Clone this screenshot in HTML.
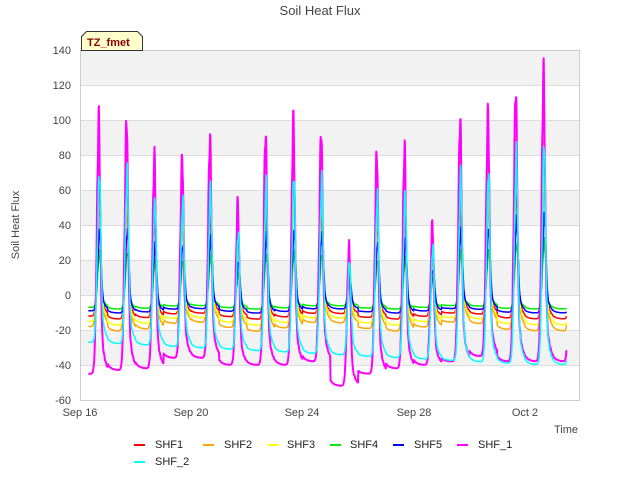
<!DOCTYPE html>
<html><head><meta charset="utf-8"><style>
html,body{margin:0;padding:0;background:#fff;width:640px;height:480px;overflow:hidden}
text{font-family:"Liberation Sans","DejaVu Sans",sans-serif}
</style></head><body>
<svg id="s" width="640" height="480" viewBox="0 0 640 480" xmlns="http://www.w3.org/2000/svg">
<rect x="0" y="0" width="640" height="480" fill="#fff"/>
<rect x="80" y="50" width="500" height="350" fill="#fff"/>
<rect x="80" y="50" width="500" height="35" fill="#f2f2f2"/>
<rect x="80" y="120" width="500" height="35" fill="#f2f2f2"/>
<rect x="80" y="190" width="500" height="35" fill="#f2f2f2"/>
<rect x="80" y="260" width="500" height="35" fill="#f2f2f2"/>
<rect x="80" y="330" width="500" height="35" fill="#f2f2f2"/>
<g stroke="#dcdcdc" stroke-width="1">
<line x1="80" y1="50.5" x2="580" y2="50.5"/><line x1="80" y1="85.5" x2="580" y2="85.5"/>
<line x1="80" y1="120.5" x2="580" y2="120.5"/><line x1="80" y1="155.5" x2="580" y2="155.5"/>
<line x1="80" y1="190.5" x2="580" y2="190.5"/><line x1="80" y1="225.5" x2="580" y2="225.5"/>
<line x1="80" y1="260.5" x2="580" y2="260.5"/><line x1="80" y1="295.5" x2="580" y2="295.5"/>
<line x1="80" y1="330.5" x2="580" y2="330.5"/><line x1="80" y1="365.5" x2="580" y2="365.5"/>
</g>
<g id="data"></g>
<rect x="80.5" y="50.5" width="499" height="350" fill="none" stroke="#ccc"/>
<g font-size="11" fill="#444" text-anchor="end">
<text x="71" y="54">140</text><text x="71" y="89">120</text><text x="71" y="124">100</text>
<text x="71" y="159">80</text><text x="71" y="194">60</text><text x="71" y="229">40</text>
<text x="71" y="264">20</text><text x="71" y="299">0</text><text x="71" y="334">-20</text>
<text x="71" y="369">-40</text><text x="71" y="404">-60</text>
</g>
<g font-size="11" fill="#444" text-anchor="middle">
<text x="80" y="416">Sep 16</text><text x="191" y="416">Sep 20</text><text x="302" y="416">Sep 24</text>
<text x="414" y="416">Sep 28</text><text x="525" y="416">Oct 2</text>
</g>
<text x="578" y="433" font-size="11" fill="#444" text-anchor="end">Time</text>
<text x="19" y="225" font-size="11" fill="#444" text-anchor="middle" transform="rotate(-90 19 225)">Soil Heat Flux</text>
<text x="320" y="15" font-size="13" fill="#444" text-anchor="middle">Soil Heat Flux</text>
<path d="M81.5,50.5 V36.5 L86.5,31.5 H137.5 L142.5,36.5 V50.5 Z" fill="#ffffcc" stroke="#333"/>
<text x="87" y="46" font-size="11" font-weight="bold" fill="#8b0000">TZ_fmet</text>
<g stroke-width="2">
<line x1="134" y1="445" x2="145" y2="445" stroke="#ff0000"/>
<line x1="203" y1="445" x2="214" y2="445" stroke="#ffa500"/>
<line x1="268" y1="445" x2="279" y2="445" stroke="#ffff00"/>
<line x1="330" y1="445" x2="341" y2="445" stroke="#00ee00"/>
<line x1="393" y1="445" x2="404" y2="445" stroke="#0000ff"/>
<line x1="457" y1="445" x2="468" y2="445" stroke="#ff00ff"/>
<line x1="134" y1="462" x2="145" y2="462" stroke="#00ffff"/>
</g>
<g font-size="11" fill="#222">
<text x="155" y="448">SHF1</text><text x="224" y="448">SHF2</text><text x="287" y="448">SHF3</text>
<text x="350" y="448">SHF4</text><text x="414" y="448">SHF5</text><text x="478" y="448">SHF_1</text>
<text x="155" y="465">SHF_2</text>
</g>
</svg>
<script>
(function(){
var P=[103,104,81,81,92,54,95,102,97,28,84,86,42,103,106,121,130];
var M=[-45,-43,-42,-36,-36,-40,-40,-40,-38,-52,-45,-42,-40,-38,-35,-38,-38];
var series=[
 {c:"#ff0000",r:0.5,b:-12,lag:0.02,w:1.5},
 {c:"#ffa500",r:0.72,b:-18,lag:0.01,w:1.5},
 {c:"#ffff00",r:0.55,b:-15,lag:0.02,w:1.5},
 {c:"#00ee00",r:0.24,b:-7,lag:0.03,w:1.5},
 {c:"#0000ff",r:0.36,b:-9,lag:0.03,w:1.5},
 {c:"#ff00ff",r:0.98,b:null,lag:0,w:2},
 {c:"#00ffff",r:0.68,b:-32,lag:0.02,w:1.5}
];
function X(t){return 80+t*27.8;}
function Y(v){return 295-v*1.75;}
function shape(f,c){
 if(f<c) return Math.exp(-Math.pow((f-c)/0.1,2));
 var u=f-c;
 return 0.65*Math.exp(-Math.pow(u/0.07,2))+0.35*Math.exp(-u/0.12);
}
var g=document.getElementById("data"),ns="http://www.w3.org/2000/svg";
series.forEach(function(s,si){
 var pts=[];
 for(var t=0.3;t<=17.5;t+=0.01){
  var d=Math.floor(t),f=t-d; if(d>16)d=16;
  var pk=P[d]*s.r;
  var base=s.b===null?M[d]:s.b*(1+0.15*Math.sin(d*1.3));
  if(si==6)base=-27-0.8*d;
  var c=0.68+s.lag;
  var sh=shape(f,c);
  var n=0.05*Math.sin(t*97+si)*sh;
  var v=base+(pk-base)*(sh+n);
  if(d>0){var pb=P[d-1]*s.r; v+=(pb-base)*0.35*Math.exp(-(f+1-c)/0.12);}
  pts.push(X(t).toFixed(1)+","+Y(v).toFixed(1));
 }
 var p=document.createElementNS(ns,"polyline");
 p.setAttribute("points",pts.join(" "));
 p.setAttribute("fill","none");p.setAttribute("stroke",s.c);
 p.setAttribute("stroke-width",s.w);p.setAttribute("stroke-linejoin","round");
 g.appendChild(p);
});
})();
</script>
</body></html>
